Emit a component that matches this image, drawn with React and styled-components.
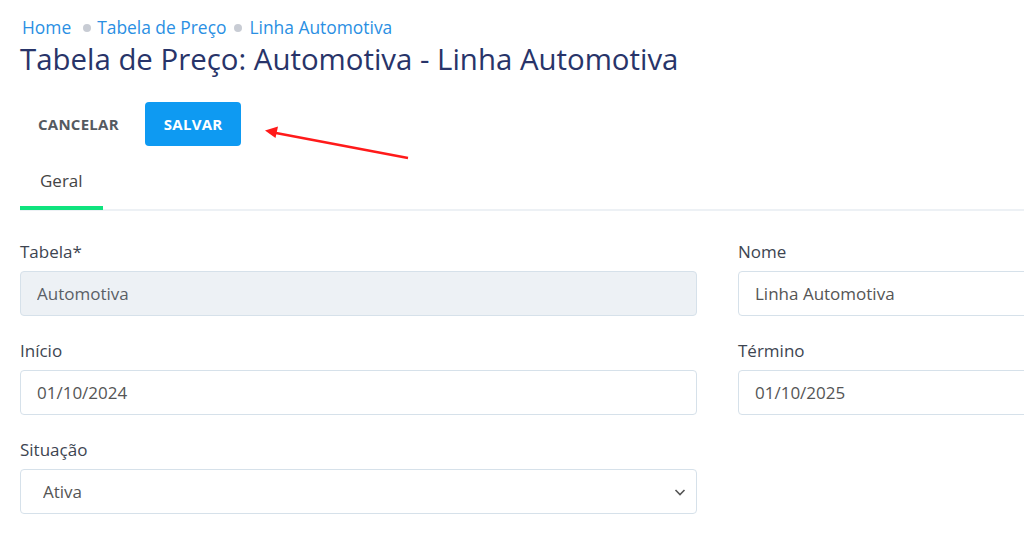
import React from "react";
import styled, { createGlobalStyle } from "styled-components";

const GlobalStyle = createGlobalStyle`
  html, body {
    margin: 0;
    padding: 0;
    background: #fff;
    overflow: hidden;
  }
  body {
    font-family: "Open Sans", "Noto Sans", Arial, sans-serif;
    color: #3d4551;
  }
`

const Page = styled.div`
  position: relative;
  width: 1400px;
  padding: 16px 20px 0 20px;
  box-sizing: border-box;
`

const Breadcrumb = styled.nav`
  display: flex;
  align-items: center;
  font-size: 17.4px;
  line-height: 23px;
  padding-left: 2px;
`

const Crumb = styled.a`
  color: #2a8fe3;
  text-decoration: none;
`

const Dot = styled.span`
  width: 8px;
  height: 8px;
  border-radius: 50%;
  background: #c8ccd4;
  margin: ${(p) => (p.$first ? "0 6px 0 12px" : "0 7px 0 8px")};
`

const Title = styled.h1`
  margin: 1px 0 0 0;
  font-size: 29.4px;
  line-height: 38px;
  font-weight: 400;
  color: #283469;
`

const Actions = styled.div`
  display: flex;
  align-items: center;
  margin-top: 24px;
  gap: 8px;
`

const Button = styled.button`
  font-family: inherit;
  font-size: 15px;
  font-weight: 700;
  letter-spacing: 0.25px;
  height: 44px;
  padding: 0 ${(p) => (p.$primary ? "19px" : "18px")};
  border: none;
  border-radius: 4px;
  cursor: pointer;
  background: ${(p) => (p.$primary ? "#0e9af2" : "transparent")};
  color: ${(p) => (p.$primary ? "#fff" : "#555a61")};
`

const Tabs = styled.div`
  display: flex;
  border-bottom: 2px solid #edf1f5;
`

const Tab = styled.div`
  padding: 23px 20px 14px 20px;
  font-size: 17px;
  line-height: 23px;
  color: #444;
  border-bottom: 4px solid ${(p) => (p.$active ? "#0fe37e" : "transparent")};
  margin-bottom: -1px;
`

const Form = styled.div`
  display: grid;
  grid-template-columns: 677px 677px;
  column-gap: 41px;
  row-gap: 24px;
  margin-top: 30px;
`

const Field = styled.div`
  display: flex;
  flex-direction: column;
  gap: 8px;
`

const Label = styled.label`
  font-size: 17px;
  line-height: 22px;
  color: #3d4551;
`

const Input = styled.input`
  font-family: inherit;
  font-size: 17px;
  color: #555;
  height: 45px;
  box-sizing: border-box;
  padding: 0 16px;
  border: 1px solid #d6e1ea;
  border-radius: 4px;
  background: ${(p) => (p.disabled ? "#edf1f5" : "#fff")};
  outline: none;
  &:disabled {
    color: #5a5f66;
  }
`

const SelectWrap = styled.div`
  position: relative;
`

const Select = styled.select`
  width: 100%;
  font-family: inherit;
  font-size: 17px;
  color: #555;
  height: 45px;
  box-sizing: border-box;
  padding: 0 22px;
  border: 1px solid #d6e1ea;
  border-radius: 4px;
  background: #fff;
  appearance: none;
  outline: none;
`

const Chevron = styled.svg`
  position: absolute;
  right: 10px;
  top: 18px;
  pointer-events: none;
`

const Arrow = styled.svg`
  position: absolute;
  left: 260px;
  top: 120px;
  pointer-events: none;
`

export default function App() {
  return (
    <>
      <GlobalStyle />
      <Page>
        <Breadcrumb>
          <Crumb href="#">Home</Crumb>
          <Dot $first />
          <Crumb href="#">Tabela de Preço</Crumb>
          <Dot />
          <Crumb href="#">Linha Automotiva</Crumb>
        </Breadcrumb>
        <Title>Tabela de Preço: Automotiva - Linha Automotiva</Title>
        <Actions>
          <Button>CANCELAR</Button>
          <Button $primary>SALVAR</Button>
        </Actions>
        <Tabs>
          <Tab $active>Geral</Tab>
        </Tabs>
        <Form>
          <Field>
            <Label>Tabela*</Label>
            <Input disabled defaultValue="Automotiva" />
          </Field>
          <Field>
            <Label>Nome</Label>
            <Input defaultValue="Linha Automotiva" />
          </Field>
          <Field>
            <Label>Início</Label>
            <Input defaultValue="01/10/2024" />
          </Field>
          <Field>
            <Label>Término</Label>
            <Input defaultValue="01/10/2025" />
          </Field>
          <Field>
            <Label>Situação</Label>
            <SelectWrap>
              <Select defaultValue="Ativa">
                <option>Ativa</option>
                <option>Inativa</option>
              </Select>
              <Chevron width="14" height="10" viewBox="0 0 14 10">
                <path d="M2.5 3l4.5 4.5 4.5-4.5" fill="none" stroke="#555" strokeWidth="1.6" />
              </Chevron>
            </SelectWrap>
          </Field>
        </Form>
        <Arrow width="160" height="45" viewBox="0 0 160 45">
          <line x1="148" y1="38" x2="16" y2="13" stroke="#ff1a1a" strokeWidth="2.5" />
          <path d="M5 10.5 L18 6.5 L15.5 18 Z" fill="#ff1a1a" />
        </Arrow>
      </Page>
    </>
  );
}
